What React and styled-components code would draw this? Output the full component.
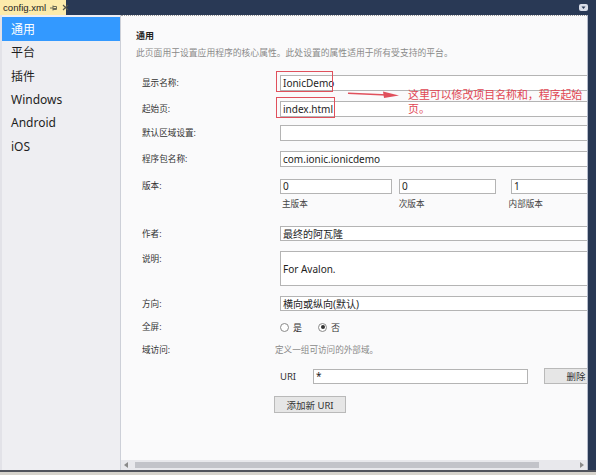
import React from "react";
import styled, { createGlobalStyle } from "styled-components";

const Global = createGlobalStyle`
  html, body { margin: 0; padding: 0; overflow: hidden; background: #293955; }
  * { box-sizing: border-box; }
`;

const CJK = `"Noto Sans", "Noto Sans CJK SC", sans-serif`;

const Frame = styled.div`
  width: 596px;
  height: 475px;
  background: #293955;
  display: flex;
  flex-direction: column;
  font-family: ${CJK};
`;

const TabStrip = styled.div`
  height: 15px;
  display: flex;
  align-items: stretch;
  padding-right: 8px;
`;

const Tab = styled.div`
  width: 66px;
  background: #fcebab;
  display: flex;
  align-items: center;
  padding-left: 3px;
  gap: 4px;
  font-family: "Liberation Sans", sans-serif;
  font-size: 9.6px;
  color: #1e1e1e;
`;

const TabIcon = styled.svg`
  display: block;
  flex: none;
`;

const Spacer = styled.div`
  flex: 1;
`;

const DropBtn = styled.div`
  align-self: center;
  display: flex;
`;

const Body = styled.div`
  height: 455px;
  width: 588px;
  display: flex;
  border-right: 1px solid #b6bccb;
`;

const Sidebar = styled.div`
  width: 121px;
  flex: none;
  background: #eeeef2;
  border-left: 2px solid #e2e2e8;
  border-right: 1px solid #cdd0d8;
  padding-top: 2px;
  display: flex;
  flex-direction: column;
`;

const NavItem = styled.div`
  height: 23.5px;
  display: flex;
  align-items: center;
  padding-left: 9px;
  font-size: 12px;
  color: ${(p) => (p.$active ? "#ffffff" : "#1e1e1e")};
  background: ${(p) => (p.$active ? "#3399ff" : "transparent")};
`;

const Editor = styled.div`
  flex: 1;
  min-width: 0;
  display: flex;
  flex-direction: column;
  background: #fafafb;
  border-top: 1px dotted #9a9a9a;
`;

const ScrollArea = styled.div`
  position: relative;
  flex: 1;
  overflow: hidden;
  padding: 14px 0 0 15px;
`;

const Heading = styled.div`
  font-size: 9px;
  font-weight: 700;
  line-height: 12px;
  color: #1e1e1e;
`;

const Description = styled.div`
  margin-top: 5px;
  font-size: 8.8px;
  line-height: 12px;
  color: #8a8a8a;
  white-space: nowrap;
`;

const Form = styled.div`
  padding-left: 6px;
  display: flex;
  flex-direction: column;
`;

const Row = styled.div`
  display: flex;
  align-items: flex-start;
  margin-top: ${(p) => p.$mt}px;
`;

const Label = styled.div`
  width: ${(p) => p.$w || 138}px;
  flex: none;
  font-size: 8.6px;
  line-height: 16px;
  color: #333;
  white-space: nowrap;
`;

const Field = styled.div`
  display: flex;
  align-items: center;
  gap: ${(p) => p.$gap || 0}px;
  height: 16px;
`;

const Input = styled.div`
  width: ${(p) => p.$w}px;
  height: ${(p) => p.$h || 16}px;
  flex: none;
  margin-left: ${(p) => p.$ml || 0}px;
  background: #ffffff;
  border: 1px solid #b4b4b4;
  padding-left: 2px;
  display: flex;
  align-items: center;
  font-size: 10px;
  color: #1e1e1e;
  white-space: nowrap;
  overflow: hidden;
`;

const SubLabels = styled.div`
  display: flex;
  margin-top: 4px;
  padding-left: 140px;
`;

const SubLabel = styled.div`
  width: ${(p) => p.$w}px;
  font-size: 8.6px;
  line-height: 12px;
  color: #444;
`;

const Radio = styled.span`
  width: 9px;
  height: 9px;
  border-radius: 50%;
  border: 1px solid #8a8a8a;
  background: #fff;
  display: inline-flex;
  align-items: center;
  justify-content: center;
  &::after {
    content: "";
    width: 4px;
    height: 4px;
    border-radius: 50%;
    background: ${(p) => (p.$on ? "#333" : "transparent")};
  }
`;

const RadioText = styled.span`
  font-size: 9px;
  color: #333;
  margin-right: 12px;
`;

const Hint = styled.div`
  margin-left: -5px;
  font-size: 8.6px;
  line-height: 16px;
  color: #8a8a8a;
  white-space: nowrap;
`;

const UriLabel = styled.span`
  width: 33px;
  font-family: "Noto Sans", sans-serif;
  font-size: 9.5px;
  color: #333;
`;

const Button = styled.div`
  width: ${(p) => p.$w}px;
  height: ${(p) => p.$h}px;
  flex: none;
  background: #e6e6e6;
  border: 1px solid #b9b9b9;
  display: flex;
  align-items: center;
  justify-content: center;
  font-size: 9.5px;
  color: #333;
  margin-left: ${(p) => p.$ml || 0}px;
  white-space: nowrap;
`;

const HScroll = styled.div`
  height: 10px;
  flex: none;
  background: #e8e8ec;
  display: flex;
  align-items: center;
  padding: 0 3px;
`;

const Thumb = styled.div`
  margin-left: 7px;
  width: 404px;
  height: 6px;
  background: #c2c3c9;
`;

const BottomStrip = styled.div`
  height: 5px;
  background: #d6d3cc;
  border-top: 2px solid #50535c;
`;

const Highlight = styled.div`
  position: absolute;
  left: ${(p) => p.$x}px;
  top: ${(p) => p.$y}px;
  width: ${(p) => p.$w}px;
  height: 21px;
  border: 1px solid #e0505c;
  pointer-events: none;
`;

const ArrowSvg = styled.svg`
  position: absolute;
  left: 226px;
  top: 73px;
`;

const Note = styled.div`
  position: absolute;
  left: 287px;
  top: 72px;
  font-size: 10.9px;
  line-height: 13.5px;
  color: #e04652;
  white-space: nowrap;
`;

export default function App() {
  const nav = ["通用", "平台", "插件", "Windows", "Android", "iOS"];
  return (
    <>
      <Global />
      <Frame>
        <TabStrip>
          <Tab>
            <span>config.xml</span>
            <TabIcon width="8" height="8" viewBox="0 0 8 8">
              <path d="M0 4H3M3 1.5V6.5M3 2.5H6.5V5.5H3M3 4.5H6.5" stroke="#6a6a58" strokeWidth="1" fill="none" />
            </TabIcon>
            <TabIcon width="7" height="7" viewBox="0 0 7 7">
              <path d="M1 1L6 6M6 1L1 6" stroke="#55554a" strokeWidth="1.1" />
            </TabIcon>
          </Tab>
          <Spacer />
          <DropBtn>
            <svg width="9" height="7" viewBox="0 0 9 7">
              <rect x="0" y="0" width="9" height="7" rx="2" fill="#d8dde8" />
              <path d="M2.5 2.5H6.5L4.5 5Z" fill="#293955" />
            </svg>
          </DropBtn>
        </TabStrip>
        <Body>
          <Sidebar>
            {nav.map((n, i) => (
              <NavItem key={n} $active={i === 0}>
                {n}
              </NavItem>
            ))}
          </Sidebar>
          <Editor>
            <ScrollArea>
              <Heading>通用</Heading>
              <Description>此页面用于设置应用程序的核心属性。此处设置的属性适用于所有受支持的平台。</Description>
              <Form>
                <Row $mt={16}>
                  <Label>显示名称:</Label>
                  <Input $w={330}>IonicDemo</Input>
                </Row>
                <Row $mt={10}>
                  <Label>起始页:</Label>
                  <Input $w={330}>index.html</Input>
                </Row>
                <Row $mt={8}>
                  <Label>默认区域设置:</Label>
                  <Input $w={330} />
                </Row>
                <Row $mt={10}>
                  <Label>程序包名称:</Label>
                  <Input $w={330}>com.ionic.ionicdemo</Input>
                </Row>
                <Row $mt={11}>
                  <Label>版本:</Label>
                  <Field>
                    <Input $w={112} $h={15}>0</Input>
                    <Input $w={97} $h={15} $ml={7}>0</Input>
                    <Input $w={100} $h={15} $ml={15}>1</Input>
                  </Field>
                </Row>
                <SubLabels>
                  <SubLabel $w={119}>主版本</SubLabel>
                  <SubLabel $w={112}>次版本</SubLabel>
                  <SubLabel $w={80}>内部版本</SubLabel>
                </SubLabels>
                <Row $mt={16}>
                  <Label>作者:</Label>
                  <Input $w={330} $h={15}>最终的阿瓦隆</Input>
                </Row>
                <Row $mt={9}>
                  <Label>说明:</Label>
                  <Input $w={330} $h={35}>For Avalon.</Input>
                </Row>
                <Row $mt={10}>
                  <Label>方向:</Label>
                  <Input $w={330} $h={15}>横向或纵向(默认)</Input>
                </Row>
                <Row $mt={7}>
                  <Label>全屏:</Label>
                  <Field $gap={4}>
                    <Radio />
                    <RadioText>是</RadioText>
                    <Radio $on />
                    <RadioText>否</RadioText>
                  </Field>
                </Row>
                <Row $mt={7}>
                  <Label>域访问:</Label>
                  <Hint>定义一组可访问的外部域。</Hint>
                </Row>
                <Row $mt={10}>
                  <Label />
                  <Field>
                    <UriLabel>URI</UriLabel>
                    <Input $w={215} $h={15}>*</Input>
                    <Button $w={64} $h={16} $ml={16}>删除</Button>
                  </Field>
                </Row>
                <Row $mt={12}>
                  <Label $w={132} />
                  <Button $w={72} $h={17}>添加新 URI</Button>
                </Row>
              </Form>

              <Highlight $x={155} $y={55} $w={57} />
              <Highlight $x={155} $y={81} $w={59} />
              <ArrowSvg width="54" height="10" viewBox="0 0 54 10">
                <path d="M1 4.2L40 6" stroke="#e0505c" strokeWidth="1.6" />
                <path d="M36 2.5L52 6.6L37 9Z" fill="#e0505c" />
              </ArrowSvg>
              <Note>
                这里可以修改项目名称和，程序起始
                <br />
                页。
              </Note>
            </ScrollArea>
            <HScroll>
              <svg width="4" height="6" viewBox="0 0 4 6">
                <path d="M4 0V6L0 3Z" fill="#8a8a8a" />
              </svg>
              <Thumb />
              <Spacer />
              <svg width="4" height="6" viewBox="0 0 4 6">
                <path d="M0 0V6L4 3Z" fill="#8a8a8a" />
              </svg>
            </HScroll>
          </Editor>
        </Body>
        <BottomStrip />
      </Frame>
    </>
  );
}
